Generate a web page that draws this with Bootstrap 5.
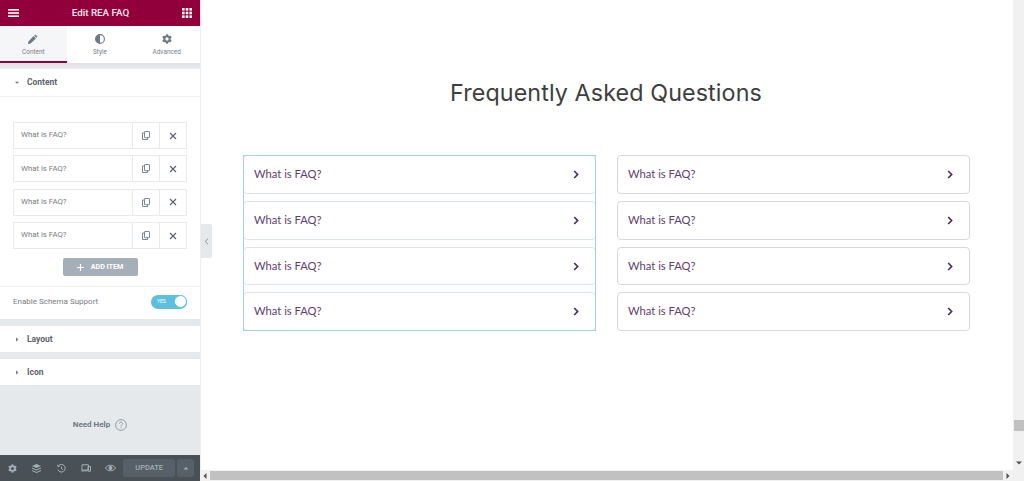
<!DOCTYPE html>
<html lang="en">
<head>
<meta charset="utf-8">
<title>Edit REA FAQ</title>
<link rel="stylesheet" href="https://cdn.jsdelivr.net/npm/bootstrap@5.3.0/dist/css/bootstrap.min.css">
<style>
html,body{height:481px;overflow:hidden;background:#fff;font-family:Roboto,"Liberation Sans",sans-serif}
.shell{height:481px}
.side{width:200px;flex:none;background:#e6e9ec;height:481px;box-shadow:1px 0 0 #eceef0}
.topbar{height:26px;background:#92003b;color:#fbe9f0;font-size:9.8px;font-weight:500;padding:0 8px 0 8px}
.tabrow{height:37px;background:#fff}
.tabitem{width:67px;font-size:6.4px;color:#7a8085;padding-top:8px;height:37px;gap:4px}
.tabitem.on{background:#f4f6f7;border-bottom:2px solid #92003b}
.band{height:6px;background:linear-gradient(#dfe2e5,#e9ebee)}
.sect{background:#fff;height:26px;font-size:8.5px;font-weight:700;color:#5b646c;padding-left:14px;gap:7px}
.sect.open{height:28px;border-bottom:1px solid #eef0f2}
.panel{background:#fff;padding:25px 13px 0}
.rep{height:27px;border:1px solid #e8eaec;margin-bottom:6.4px;font-size:7.8px;color:#777c80}
.rep-t{flex:1;padding-left:7px;padding-bottom:1px}
.rep-b{width:27px;height:100%;border-left:1px solid #e8eaec}
.addbtn{width:75px;height:18px;background:#a4afb7;color:#fff;font-size:7.2px;font-weight:700;border-radius:2px;margin:9px auto 0;gap:7px;padding:0;border:0}
.addbtn:hover{background:#a4afb7;color:#fff}
.swrow{background:#fff;border-top:1px solid #f0f1f3;margin-top:10px;margin-left:-13px;margin-right:-13px;padding:0 13px 3px;height:33px;font-size:8px;color:#777c80}
.togl{width:36px;height:14px;border-radius:7px;background:#5bc0de;color:#fff;font-size:5px;padding-left:6px}
.knob{width:13px;height:13px;border-radius:50%;background:#fff;border:1px solid #5bc0de}
.gap7{height:7px;background:#e6e9ec}
.helpzone{flex:1;color:#6d7882;font-size:8px;font-weight:700;gap:5px;padding-top:9px}
.footbar{height:26px;background:#495157;padding:0 6px 0 0}
.fico{width:25px}
.upbtn{width:53px;height:18px;background:#556068;color:#a4afb7;font-size:7.5px;font-weight:500;border-radius:2px}
.uparr{width:17px;height:18px;background:#556068;border-radius:2px;margin-left:2px}
.main{flex:1;min-width:0;height:481px;position:relative}
.canvas{flex:1;min-height:0;padding:77px 44px 0 43px}
.pagehead{font-family:Inter,Roboto,sans-serif;font-weight:400;font-size:23.3px;line-height:32px;color:#3e3e3e;margin:0 0 46px;letter-spacing:.1px}
.faqgrid{display:grid;grid-template-columns:353px 353px;column-gap:21px;align-items:start}
.faqcol{display:flex;flex-direction:column;gap:7px;position:relative}
.faqitem{height:39px;border:1px solid #d5d8dc;border-radius:4px;padding:0 16px 0 10px;color:#5f3e6e;font-family:Lato,"Noto Sans",sans-serif;font-size:11.2px}
.faqitem:nth-child(3){height:38px}
.faqcol.sel .faqitem{border-color:#dce6ea}
.faqcol.sel::after{content:"";position:absolute;inset:0;border:1px solid #a5d3df;pointer-events:none}
.sbar-h{height:11px;background:#f1f1f1}
.sbar-v{width:11px;background:#f1f1f1;flex:none}
.thumb-v{position:absolute;right:0;top:420px;width:10px;height:11px;background:#c1c1c1}
.thumb-h{flex:1;height:9px;background:#c1c1c1}
.sarr{width:10px;flex:none}
.handle{position:absolute;left:1px;top:224px;width:11px;height:34px;background:#e6e9ec;border-radius:0 2px 2px 0}
</style>
</head>
<body>
<div class="d-flex shell">
  <aside class="side d-flex flex-column">
    <div class="topbar d-flex align-items-center justify-content-between">
      <svg width="11" height="8" viewBox="0 0 11 8" fill="#fff"><rect width="11" height="1.6"/><rect y="3.2" width="11" height="1.6"/><rect y="6.4" width="11" height="1.6"/></svg>
      <span>Edit REA FAQ</span>
      <svg width="10" height="10" viewBox="0 0 10 10" fill="#fff"><rect width="2.6" height="2.6"/><rect x="3.7" width="2.6" height="2.6"/><rect x="7.4" width="2.6" height="2.6"/><rect y="3.7" width="2.6" height="2.6"/><rect x="3.7" y="3.7" width="2.6" height="2.6"/><rect x="7.4" y="3.7" width="2.6" height="2.6"/><rect y="7.4" width="2.6" height="2.6"/><rect x="3.7" y="7.4" width="2.6" height="2.6"/><rect x="7.4" y="7.4" width="2.6" height="2.6"/></svg>
    </div>
    <div class="tabrow d-flex">
      <div class="tabitem on d-flex flex-column align-items-center">
        <svg width="10" height="10" viewBox="0 0 10 10" fill="#6d7882"><path d="M7.3.4 9.6 2.7 8.5 3.8 6.2 1.5ZM5.6 2.1 7.9 4.4 2.6 9.6 0 10l.4-2.6Z"/></svg>
        <span>Content</span>
      </div>
      <div class="tabitem d-flex flex-column align-items-center">
        <svg width="10" height="10" viewBox="0 0 10 10"><circle cx="5" cy="5" r="4.4" fill="#fff" stroke="#6d7882" stroke-width="1.1"/><path d="M5 .6a4.4 4.4 0 0 0 0 8.8Z" fill="#6d7882"/></svg>
        <span>Style</span>
      </div>
      <div class="tabitem d-flex flex-column align-items-center">
        <svg width="10" height="10" viewBox="0 0 10 10" fill="none"><circle cx="5" cy="5" r="2.7" stroke="#6d7882" stroke-width="2"/><path d="M5 .2v2M5 7.8v2M.8 2.6l1.7 1M7.5 6.4l1.7 1M.8 7.4l1.7-1M7.5 3.6l1.7-1" stroke="#6d7882" stroke-width="1.8"/></svg>
        <span>Advanced</span>
      </div>
    </div>
    <div class="band"></div>
    <div class="sect open d-flex align-items-center">
      <svg width="6" height="7" viewBox="0 0 7 7" fill="#6d7882"><path d="M1 2.5h5L3.5 5Z"/></svg><span>Content</span>
    </div>
    <div class="panel">
      <div class="rep d-flex align-items-center"><span class="rep-t">What is FAQ?</span><span class="rep-b d-flex align-items-center justify-content-center"><svg width="8" height="9" viewBox="0 0 8 9" fill="none" stroke="#6d7882" stroke-width=".9"><rect x="2.5" y=".5" width="5" height="6.2" rx=".6"/><path d="M2.5 2H.5v6.5h5V6.7"/></svg></span><span class="rep-b d-flex align-items-center justify-content-center"><svg width="8" height="8" viewBox="0 0 8 8" stroke="#5b646c" stroke-width="1.2"><path d="M1 1l6 6M7 1 1 7"/></svg></span></div>
      <div class="rep d-flex align-items-center"><span class="rep-t">What is FAQ?</span><span class="rep-b d-flex align-items-center justify-content-center"><svg width="8" height="9" viewBox="0 0 8 9" fill="none" stroke="#6d7882" stroke-width=".9"><rect x="2.5" y=".5" width="5" height="6.2" rx=".6"/><path d="M2.5 2H.5v6.5h5V6.7"/></svg></span><span class="rep-b d-flex align-items-center justify-content-center"><svg width="8" height="8" viewBox="0 0 8 8" stroke="#5b646c" stroke-width="1.2"><path d="M1 1l6 6M7 1 1 7"/></svg></span></div>
      <div class="rep d-flex align-items-center"><span class="rep-t">What is FAQ?</span><span class="rep-b d-flex align-items-center justify-content-center"><svg width="8" height="9" viewBox="0 0 8 9" fill="none" stroke="#6d7882" stroke-width=".9"><rect x="2.5" y=".5" width="5" height="6.2" rx=".6"/><path d="M2.5 2H.5v6.5h5V6.7"/></svg></span><span class="rep-b d-flex align-items-center justify-content-center"><svg width="8" height="8" viewBox="0 0 8 8" stroke="#5b646c" stroke-width="1.2"><path d="M1 1l6 6M7 1 1 7"/></svg></span></div>
      <div class="rep d-flex align-items-center"><span class="rep-t">What is FAQ?</span><span class="rep-b d-flex align-items-center justify-content-center"><svg width="8" height="9" viewBox="0 0 8 9" fill="none" stroke="#6d7882" stroke-width=".9"><rect x="2.5" y=".5" width="5" height="6.2" rx=".6"/><path d="M2.5 2H.5v6.5h5V6.7"/></svg></span><span class="rep-b d-flex align-items-center justify-content-center"><svg width="8" height="8" viewBox="0 0 8 8" stroke="#5b646c" stroke-width="1.2"><path d="M1 1l6 6M7 1 1 7"/></svg></span></div>
      <button class="btn addbtn d-flex align-items-center justify-content-center"><svg width="7" height="7" viewBox="0 0 7 7" stroke="#fff" stroke-width="1.2"><path d="M3.5 0v7M0 3.5h7"/></svg>ADD ITEM</button>
      <div class="swrow d-flex align-items-center justify-content-between">
        <span>Enable Schema Support</span>
        <span class="togl d-flex align-items-center justify-content-between">YES<span class="knob"></span></span>
      </div>
    </div>
    <div class="gap7"></div>
    <div class="sect d-flex align-items-center"><svg width="6" height="7" viewBox="0 0 7 7" fill="#6d7882"><path d="M2.5 1v5L5 3.5Z"/></svg><span>Layout</span></div>
    <div class="gap7"></div>
    <div class="sect d-flex align-items-center"><svg width="6" height="7" viewBox="0 0 7 7" fill="#6d7882"><path d="M2.5 1v5L5 3.5Z"/></svg><span>Icon</span></div>
    <div class="helpzone d-flex align-items-center justify-content-center">
      <span>Need Help</span>
      <svg width="12" height="12" viewBox="0 0 12 12" fill="none" stroke="#8b949c" stroke-width=".9"><circle cx="6" cy="6" r="5.4"/><path d="M4.4 4.7c0-2.1 3.2-2.1 3.2 0 0 1.2-1.6 1.2-1.6 2.6M6 8.2v1.1"/></svg>
    </div>
    <div class="footbar d-flex align-items-center">
      <span class="fico d-flex justify-content-center"><svg width="9" height="9" viewBox="0 0 10 10" fill="none"><circle cx="5" cy="5" r="2.7" stroke="#a4afb7" stroke-width="2"/><path d="M5 .2v2M5 7.8v2M.8 2.6l1.7 1M7.5 6.4l1.7 1M.8 7.4l1.7-1M7.5 3.6l1.7-1" stroke="#a4afb7" stroke-width="1.8"/></svg></span>
      <span class="fico d-flex justify-content-center"><svg width="9" height="9" viewBox="0 0 9 9" fill="#a4afb7"><path d="M4.5 0 9 2 4.5 4 0 2ZM0 3.4l4.5 2 4.5-2v1.1l-4.5 2-4.5-2ZM0 5.9l4.5 2 4.5-2V7L4.5 9 0 7Z"/></svg></span>
      <span class="fico d-flex justify-content-center"><svg width="9" height="9" viewBox="0 0 9 9" fill="none" stroke="#a4afb7" stroke-width="1"><path d="M1.5 1.8A3.8 3.8 0 1 1 .8 5.5M.8.6v1.8h1.9M4.5 2.6v2.2l1.4.8"/></svg></span>
      <span class="fico d-flex justify-content-center"><svg width="10" height="8" viewBox="0 0 10 8" fill="none" stroke="#a4afb7" stroke-width="1"><path d="M1 6V.8h6.4V6ZM.2 6.9h6M7 2.6h2.5v4.6H7Z"/></svg></span>
      <span class="fico d-flex justify-content-center"><svg width="11" height="8" viewBox="0 0 11 8"><path d="M.4 4C2.8.3 8.2.3 10.6 4 8.2 7.7 2.8 7.7.4 4Z" fill="none" stroke="#a4afb7"/><circle cx="5.5" cy="4" r="2" fill="#a4afb7"/></svg></span>
      <span class="upbtn d-flex align-items-center justify-content-center">UPDATE</span>
      <span class="uparr d-flex align-items-center justify-content-center"><svg width="6" height="5" viewBox="0 0 6 5" fill="#a4afb7"><path d="M.5 3.5 3 1l2.5 2.5Z"/></svg></span>
    </div>
  </aside>
  <main class="main d-flex">
    <div class="handle d-flex align-items-center justify-content-center"><svg width="5" height="7" viewBox="0 0 5 7" fill="none" stroke="#8b949c" stroke-width="1"><path d="M4 .8 1.2 3.5 4 6.2"/></svg></div>
    <div class="flex-grow-1 d-flex flex-column" style="min-width:0">
      <div class="canvas">
        <h1 class="pagehead text-center">Frequently Asked Questions</h1>
        <div class="faqgrid">
          <div class="faqcol sel">
            <div class="faqitem d-flex align-items-center justify-content-between"><span>What is FAQ?</span><svg width="6" height="9" viewBox="0 0 6 9" fill="none" stroke="#4a2f5c" stroke-width="1.7"><path d="M1.2 1 4.6 4.5 1.2 8"/></svg></div>
            <div class="faqitem d-flex align-items-center justify-content-between"><span>What is FAQ?</span><svg width="6" height="9" viewBox="0 0 6 9" fill="none" stroke="#4a2f5c" stroke-width="1.7"><path d="M1.2 1 4.6 4.5 1.2 8"/></svg></div>
            <div class="faqitem d-flex align-items-center justify-content-between"><span>What is FAQ?</span><svg width="6" height="9" viewBox="0 0 6 9" fill="none" stroke="#4a2f5c" stroke-width="1.7"><path d="M1.2 1 4.6 4.5 1.2 8"/></svg></div>
            <div class="faqitem d-flex align-items-center justify-content-between"><span>What is FAQ?</span><svg width="6" height="9" viewBox="0 0 6 9" fill="none" stroke="#4a2f5c" stroke-width="1.7"><path d="M1.2 1 4.6 4.5 1.2 8"/></svg></div>
          </div>
          <div class="faqcol">
            <div class="faqitem d-flex align-items-center justify-content-between"><span>What is FAQ?</span><svg width="6" height="9" viewBox="0 0 6 9" fill="none" stroke="#4a2f5c" stroke-width="1.7"><path d="M1.2 1 4.6 4.5 1.2 8"/></svg></div>
            <div class="faqitem d-flex align-items-center justify-content-between"><span>What is FAQ?</span><svg width="6" height="9" viewBox="0 0 6 9" fill="none" stroke="#4a2f5c" stroke-width="1.7"><path d="M1.2 1 4.6 4.5 1.2 8"/></svg></div>
            <div class="faqitem d-flex align-items-center justify-content-between"><span>What is FAQ?</span><svg width="6" height="9" viewBox="0 0 6 9" fill="none" stroke="#4a2f5c" stroke-width="1.7"><path d="M1.2 1 4.6 4.5 1.2 8"/></svg></div>
            <div class="faqitem d-flex align-items-center justify-content-between"><span>What is FAQ?</span><svg width="6" height="9" viewBox="0 0 6 9" fill="none" stroke="#4a2f5c" stroke-width="1.7"><path d="M1.2 1 4.6 4.5 1.2 8"/></svg></div>
          </div>
        </div>
      </div>
      <div class="sbar-h d-flex align-items-center">
        <span class="sarr d-flex justify-content-center"><svg width="4" height="6" viewBox="0 0 4 6" fill="#505050"><path d="M3.5 0v6L.5 3Z"/></svg></span>
        <span class="thumb-h"></span>
        <span class="sarr d-flex justify-content-center"><svg width="4" height="6" viewBox="0 0 4 6" fill="#505050"><path d="M.5 0v6l3-3Z"/></svg></span>
      </div>
    </div>
    <div class="sbar-v d-flex flex-column justify-content-end align-items-center pb-3"><svg width="6" height="4" viewBox="0 0 6 4" fill="#505050"><path d="M0 .5h6L3 3.5Z"/></svg></div>
    <div class="thumb-v"></div>
  </main>
</div>
<script src="https://cdn.jsdelivr.net/npm/bootstrap@5.3.0/dist/js/bootstrap.bundle.min.js"></script>
</body>
</html>
